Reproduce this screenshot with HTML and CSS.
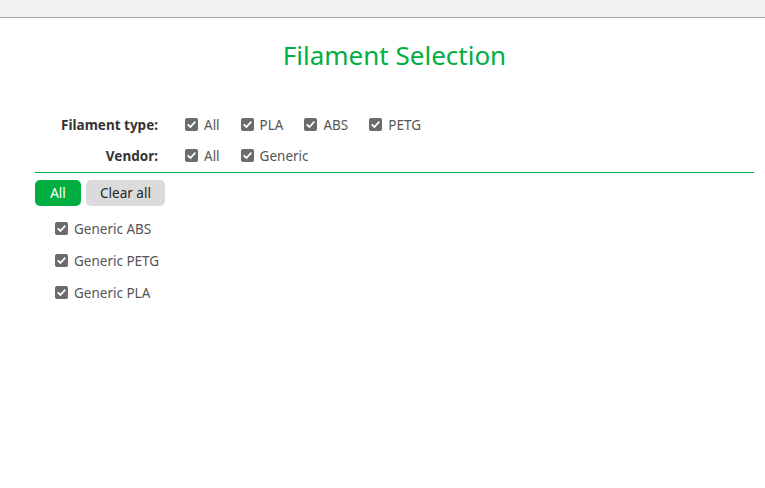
FILE: index.html
```html
<!DOCTYPE html>
<html>
<head>
<meta charset="utf-8">
<link rel="stylesheet" href="styles.css">
</head>
<body>
<div class="topbar"></div>
<main class="content">
  <h1 class="title">Filament Selection</h1>
  <div class="filters">
    <div class="filter-row">
      <div class="filter-label">Filament type:</div>
      <div class="options">
        <label class="opt"><span class="cb"><svg viewBox="0 0 13 13"><path d="M3.2 6.8 L5.5 9 L9.8 4.2" /></svg></span>All</label>
        <label class="opt"><span class="cb"><svg viewBox="0 0 13 13"><path d="M3.2 6.8 L5.5 9 L9.8 4.2" /></svg></span>PLA</label>
        <label class="opt"><span class="cb"><svg viewBox="0 0 13 13"><path d="M3.2 6.8 L5.5 9 L9.8 4.2" /></svg></span>ABS</label>
        <label class="opt"><span class="cb"><svg viewBox="0 0 13 13"><path d="M3.2 6.8 L5.5 9 L9.8 4.2" /></svg></span>PETG</label>
      </div>
    </div>
    <div class="filter-row">
      <div class="filter-label">Vendor:</div>
      <div class="options">
        <label class="opt"><span class="cb"><svg viewBox="0 0 13 13"><path d="M3.2 6.8 L5.5 9 L9.8 4.2" /></svg></span>All</label>
        <label class="opt"><span class="cb"><svg viewBox="0 0 13 13"><path d="M3.2 6.8 L5.5 9 L9.8 4.2" /></svg></span>Generic</label>
      </div>
    </div>
  </div>
  <div class="divider"></div>
  <div class="actions">
    <button class="btn btn-primary">All</button>
    <button class="btn btn-secondary">Clear all</button>
  </div>
  <ul class="list">
    <li class="item"><span class="cb"><svg viewBox="0 0 13 13"><path d="M3.2 6.8 L5.5 9 L9.8 4.2" /></svg></span>Generic ABS</li>
    <li class="item"><span class="cb"><svg viewBox="0 0 13 13"><path d="M3.2 6.8 L5.5 9 L9.8 4.2" /></svg></span>Generic PETG</li>
    <li class="item"><span class="cb"><svg viewBox="0 0 13 13"><path d="M3.2 6.8 L5.5 9 L9.8 4.2" /></svg></span>Generic PLA</li>
  </ul>
</main>
</body>
</html>
```
FILE: styles.css
```css
* { box-sizing: border-box; }
html, body { margin: 0; padding: 0; background: #fff; }
body {
  font-family: "Noto Sans", "Open Sans", sans-serif;
  font-size: 13.5px;
  color: #4d4d4d;
}
.topbar {
  height: 18px;
  background: #f2f2f2;
  border-bottom: 1px solid #a9a9a9;
}
.content {
  padding: 0 11px 0 35px;
}
.title {
  margin: 19px 0 0 0;
  text-align: center;
  font-weight: normal;
  font-size: 26px;
  line-height: 36px;
  color: #00ae42;
}
.filters {
  margin-top: 42px;
  display: flex;
  flex-direction: column;
  gap: 12px;
}
.filter-row {
  display: flex;
  align-items: center;
  height: 19px;
}
.filter-label {
  width: 123px;
  text-align: right;
  font-weight: bold;
  color: #333;
  margin-right: 27px;
}
.options {
  display: flex;
  gap: 21px;
}
.opt {
  display: flex;
  align-items: center;
  gap: 6px;
  color: #555;
}
.cb {
  width: 13px;
  height: 13px;
  border-radius: 2px;
  background: #6b6b6b;
  display: inline-flex;
  flex: none;
}
.cb svg {
  width: 13px;
  height: 13px;
  fill: none;
  stroke: #fff;
  stroke-width: 1.8;
  stroke-linecap: round;
  stroke-linejoin: round;
}
.divider {
  margin-top: 7px;
  height: 1px;
  background: #00ae42;
}
.actions {
  margin-top: 7px;
  display: flex;
  gap: 5px;
}
.btn {
  font-family: inherit;
  font-size: 13.5px;
  border: none;
  border-radius: 5px;
  height: 26px;
  padding: 0;
  cursor: pointer;
}
.btn-primary {
  background: #00ae42;
  color: #fff;
  width: 46px;
}
.btn-secondary {
  background: #dbdbdb;
  color: #262626;
  width: 79px;
}
.list {
  list-style: none;
  margin: 13px 0 0 0;
  padding: 0 0 0 20px;
  display: flex;
  flex-direction: column;
  gap: 13px;
}
.item {
  display: flex;
  align-items: center;
  gap: 6px;
  height: 19px;
  color: #555;
}
```
